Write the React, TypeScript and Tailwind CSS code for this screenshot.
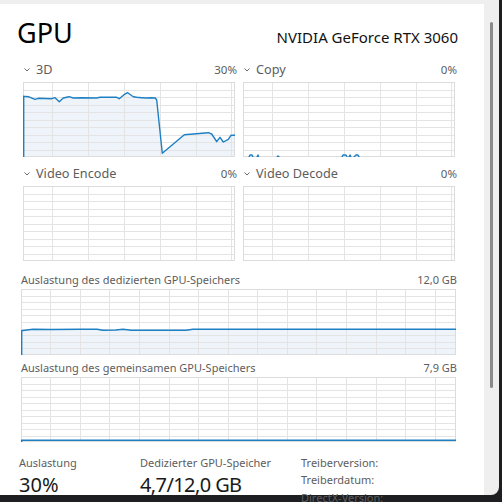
import React from "react";

const LINE = "#1f7fc3";
const FILL = "#eef4f9";
const GRID = "#e4e4e4";

type Pt = [number, number];

const toPath = (pts: Pt[]) => pts.map((p, i) => `${i ? "L" : "M"}${p[0]},${p[1]}`).join(" ");

function Chart({
  w,
  h,
  vx,
  pts,
  area = true,
}: {
  w: number;
  h: number;
  vx: number[];
  pts?: Pt[];
  area?: boolean;
}) {
  const rows = Array.from({ length: 9 }, (_, i) => ((i + 1) * h) / 10);
  return (
    <svg width={w} height={h} className="block overflow-hidden">
      <rect x={0} y={0} width={w} height={h} fill="white" />
      {pts && area && <path d={`${toPath(pts)} L${w},${h} L0,${h} Z`} fill={FILL} />}
      {rows.map((y) => (
        <line key={y} x1={0} x2={w} y1={Math.round(y) + 0.5} y2={Math.round(y) + 0.5} stroke={GRID} />
      ))}
      {vx.map((x) => (
        <line key={x} y1={0} y2={h} x1={Math.round(x) + 0.5} x2={Math.round(x) + 0.5} stroke={GRID} />
      ))}
      <rect x={0.5} y={0.5} width={w - 1} height={h - 1} fill="none" stroke="#dcdcdc" />
      {pts && (
        <path
          d={area ? `M0.7,${h} L0.7,${pts[0][1]} ${toPath(pts).replace(/^M/, "L")}` : toPath(pts)}
          fill="none"
          stroke={LINE}
          strokeWidth={1.4}
          strokeLinejoin="round"
        />
      )}
    </svg>
  );
}

const smallV = [29, 65, 101, 137, 172.5, 208];
const wideV = Array.from({ length: 14 }, (_, i) => 29.3 + i * 29.57);

const raw3d: Pt[] = [
  [23, 96.3], [28.3, 96.7], [35, 99.3], [38.3, 98.3], [51.7, 98.7], [55, 97.7], [59.3, 101.7],
  [63.3, 98], [69, 96.7], [73.3, 98], [81.7, 97.7], [96.7, 98], [100, 97.3], [116.7, 97.3],
  [119.3, 98.7], [124, 94.7], [127.7, 92.7], [133.3, 96.7], [136.7, 97.3], [141.7, 97.7],
  [146.7, 98], [151.7, 97.7], [155.3, 98], [156.7, 100], [162.3, 153.3], [173.3, 144],
  [184.3, 134.7], [193.3, 134], [208.3, 132.7], [211.7, 134], [216.7, 141.7], [220, 137.3],
  [223.3, 142], [228.3, 139.3], [231, 135.3], [235, 135.3],
];
const pts3d: Pt[] = raw3d.map(([x, y]) => [x - 23, y - 82]);

const ptsCopy: Pt[] = [
  [0, 77], [5, 77], [7, 73], [9, 73], [11, 77], [13, 77], [15, 73], [16, 77], [33, 77], [35, 74],
  [38, 77], [98, 77], [100, 73], [103, 73], [105, 77], [107, 73], [109, 77], [113, 73], [115, 73],
  [117, 77], [212, 77],
];

const ptsDed: Pt[] = [
  [0, 41.7], [6, 41], [12, 40.3], [30, 40.5], [60, 40.3], [76, 40.3], [82, 41.2], [95, 41],
  [102, 40.3], [110, 41.2], [165, 41.2], [172, 40.3], [178, 40.3], [435, 40.3],
];

const ptsShared: Pt[] = [
  [0, 63.3], [435, 63.3],
];

function Chevron() {
  return (
    <svg width="6" height="4" viewBox="0 0 6 4" className="mr-[6px] mt-[1px]">
      <path d="M0.5 0.5 L3 3 L5.5 0.5" fill="none" stroke="#6b6b6b" strokeWidth="1" />
    </svg>
  );
}

function Engine({ name, pct, pts }: { name: string; pct: string; pts?: Pt[] }) {
  return (
    <div className="flex w-[214px] flex-col">
      <div className="flex h-[17px] items-center justify-between">
        <div className="flex items-center pl-[1px] text-[12.7px] text-[#5d5d5d]">
          <Chevron />
          {name}
        </div>
        <span className="text-[11.5px] text-[#5d5d5d]">{pct}</span>
      </div>
      <div className="mt-[4px]">
        <Chart w={212} h={75} vx={smallV} pts={pts} area={name === "3D"} />
      </div>
    </div>
  );
}

export default function App() {
  return (
    <div className="flex h-[502px] w-[502px] flex-col overflow-hidden bg-[#1e1f22] font-['Segoe_UI','Noto_Sans',sans-serif]">
      <div className="flex h-[495px] w-[499px] flex-col rounded-br-[8px] bg-[#efefef]">
        <div className="h-[4px]" />
        <div className="flex min-h-0 flex-1">
          <div className="w-[484px] bg-white">
            <div className="flex h-[46px] items-baseline justify-between pl-[17px] pr-[26px] pt-[12px]">
              <span className="text-[27px] leading-[34px] text-black">GPU</span>
              <span className="text-[15px] leading-[34px] text-[#111]">NVIDIA GeForce RTX 3060</span>
            </div>

            <div className="flex gap-[6px] pl-[23px] pt-[11px]">
              <Engine name="3D" pct="30%" pts={pts3d} />
              <Engine name="Copy" pct="0%" pts={ptsCopy} />
            </div>
            <div className="flex gap-[6px] pl-[23px] pt-[8px]">
              <Engine name="Video Encode" pct="0%" />
              <Engine name="Video Decode" pct="0%" />
            </div>

            <div className="flex flex-col pl-[21px] pt-[10px]">
              <div className="flex h-[18px] w-[436px] items-center justify-between text-[11px] text-[#5d5d5d]">
                <span>Auslastung des dedizierten GPU-Speichers</span>
                <span>12,0 GB</span>
              </div>
              <Chart w={435} h={66} vx={wideV} pts={ptsDed} />
            </div>

            <div className="flex flex-col pl-[21px] pt-[4px]">
              <div className="flex h-[18px] w-[436px] items-center justify-between text-[11px] text-[#5d5d5d]">
                <span>Auslastung des gemeinsamen GPU-Speichers</span>
                <span>7,9 GB</span>
              </div>
              <Chart w={435} h={65} vx={wideV} pts={ptsShared} />
            </div>

            <div className="flex pt-[13px]">
              <div className="flex w-[140px] flex-col pl-[19px]">
                <span className="h-[16px] text-[11px] leading-[16px] text-[#5d5d5d]">Auslastung</span>
                <span className="text-[20px] leading-[28px] text-[#1a1a1a]">30%</span>
              </div>
              <div className="flex w-[161px] flex-col">
                <span className="h-[16px] text-[11px] leading-[16px] text-[#5d5d5d]">Dedizierter GPU-Speicher</span>
                <span className="text-[20px] leading-[28px] tracking-[-0.6px] text-[#1a1a1a]">4,7/12,0 GB</span>
              </div>
              <div className="flex flex-col text-[11px] leading-[18px] text-[#5d5d5d]">
                <span className="h-[16px] leading-[16px]">Treiberversion:</span>
                <span>Treiberdatum:</span>
                <span>DirectX-Version:</span>
              </div>
            </div>
          </div>
          <div className="flex w-[15px] justify-center pt-[18px]">
            <div className="h-[366px] w-[3px] rounded-full bg-[#8a8a8a]" />
          </div>
        </div>
      </div>
    </div>
  );
}
